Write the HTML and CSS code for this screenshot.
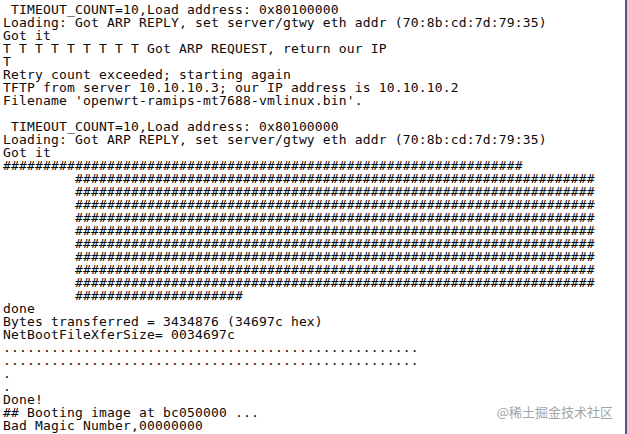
FILE: index.html
```html
<!DOCTYPE html>
<html>
<head>
<meta charset="utf-8">
<link rel="stylesheet" href="styles.css">
</head>
<body>
<div class="screen">
<div class="console">
<pre class="block"> TIMEOUT_COUNT=10,Load address: 0x80100000
Loading: Got ARP REPLY, set server/gtwy eth addr (70:8b:cd:7d:79:35)
Got it
T T T T T T T T T Got ARP REQUEST, return our IP
T
Retry count exceeded; starting again
TFTP from server 10.10.10.3; our IP address is 10.10.10.2
Filename 'openwrt-ramips-mt7688-vmlinux.bin'.

 TIMEOUT_COUNT=10,Load address: 0x80100000
Loading: Got ARP REPLY, set server/gtwy eth addr (70:8b:cd:7d:79:35)
Got it
#################################################################
         #################################################################
         #################################################################
         #################################################################
         #################################################################
         #################################################################
         #################################################################
         #################################################################
         #################################################################
         #################################################################
         #####################
done
Bytes transferred = 3434876 (34697c hex)
NetBootFileXferSize= 0034697c
....................................................
....................................................
.
.</pre>
<pre class="block">Done!
## Booting image at bc050000 ...
Bad Magic Number,00000000</pre>
</div>
<div class="watermark">@稀土掘金技术社区</div>
</div>
</body>
</html>
```

FILE: styles.css
```css
html, body {
  margin: 0;
  padding: 0;
  background: #ffffff;
}
.screen {
  position: relative;
  width: 625px;
  height: 434px;
  border-right: 2px solid #55558f;
  overflow: hidden;
}
.console {
  display: flex;
  flex-direction: column;
  align-items: flex-start;
  padding: 3px 0 0 3px;
}
.block {
  margin: 0;
  font-family: "DejaVu Sans Mono", monospace;
  font-size: 13px;
  letter-spacing: 0.17px;
  line-height: 13px;
  color: #0a0a0a;
}
.watermark {
  position: absolute;
  right: 12px;
  top: 404px;
  font-family: "Noto Sans CJK SC", sans-serif;
  font-size: 13px;
  line-height: 16px;
  color: #a4a4a4;
}
```
